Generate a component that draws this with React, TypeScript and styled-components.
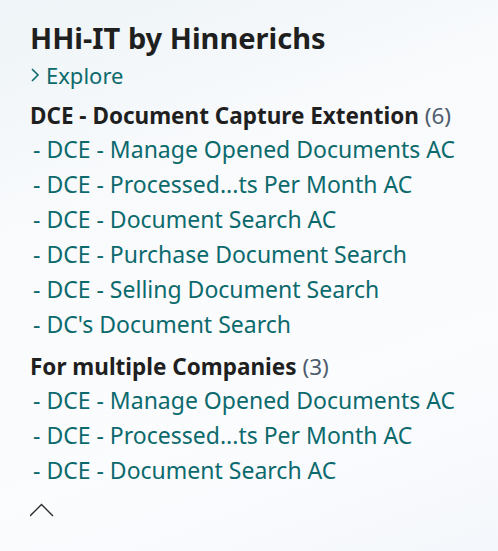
import React from "react";
import styled, { createGlobalStyle } from "styled-components";

const Global = createGlobalStyle`
  html, body { margin: 0; padding: 0; }
  body {
    width: 498px;
    height: 551px;
    overflow: hidden;
    background: linear-gradient(160deg, #eef4f7 0%, #f8fafc 30%, #fbfcfe 70%, #f4f7fb 100%);
    font-family: "Noto Sans", "Open Sans", sans-serif;
  }
`;

const Panel = styled.div`
  display: flex;
  flex-direction: column;
  padding: 19px 0 0 30px;
`;

const Title = styled.h1`
  margin: 0;
  font-size: 29px;
  font-weight: 700;
  color: #1f1f1f;
  line-height: 38px;
`;

const Explore = styled.a`
  display: flex;
  align-items: center;
  gap: 4px;
  color: #0c6a6d;
  font-size: 22px;
  line-height: 32px;
  margin-top: 2px;
  text-decoration: none;
`;

const Section = styled.section`
  display: flex;
  flex-direction: column;
  margin-top: 9px;
`;

const Heading = styled.h2`
  margin: 0;
  font-size: 22.5px;
  font-weight: 700;
  color: #1f1f1f;
  line-height: 32px;
`;

const Count = styled.span`
  font-weight: 400;
  color: #505c6d;
`;

const LinkList = styled.ul`
  list-style: none;
  margin: 0;
  padding: 0 0 0 3px;
  display: flex;
  flex-direction: column;
`;

const LinkItem = styled.li`
  font-size: 23px;
  line-height: 35px;
  color: #0c6a6d;
  white-space: nowrap;
`;

const Collapse = styled.button`
  border: 0;
  background: none;
  padding: 0;
  margin-top: 13px;
  width: 26px;
  height: 18px;
  cursor: pointer;
  display: flex;
`;

const sections = [
  {
    title: "DCE - Document Capture Extention",
    items: [
      "- DCE - Manage Opened Documents AC",
      "- DCE - Processed...ts Per Month AC",
      "- DCE - Document Search AC",
      "- DCE - Purchase Document Search",
      "- DCE - Selling Document Search",
      "- DC's Document Search",
    ],
  },
  {
    title: "For multiple Companies",
    items: [
      "- DCE - Manage Opened Documents AC",
      "- DCE - Processed...ts Per Month AC",
      "- DCE - Document Search AC",
    ],
  },
];

export default function App() {
  return (
    <>
      <Global />
      <Panel>
        <Title>HHi-IT by Hinnerichs</Title>
        <Explore>
          <svg width="12" height="16" viewBox="0 0 12 16">
            <path d="M2 2 L8 8 L2 14" fill="none" stroke="#0c6a6d" strokeWidth="1.6" />
          </svg>
          Explore
        </Explore>
        {sections.map((s) => (
          <Section key={s.title}>
            <Heading>
              {s.title} <Count>({s.items.length})</Count>
            </Heading>
            <LinkList>
              {s.items.map((it, i) => (
                <LinkItem key={i}>{it}</LinkItem>
              ))}
            </LinkList>
          </Section>
        ))}
        <Collapse aria-label="Collapse">
          <svg width="26" height="18" viewBox="0 0 26 18">
            <path d="M0 15 L11.5 3.5 L23 15" fill="none" stroke="#2a2a2a" strokeWidth="1.4" />
          </svg>
        </Collapse>
      </Panel>
    </>
  );
}
